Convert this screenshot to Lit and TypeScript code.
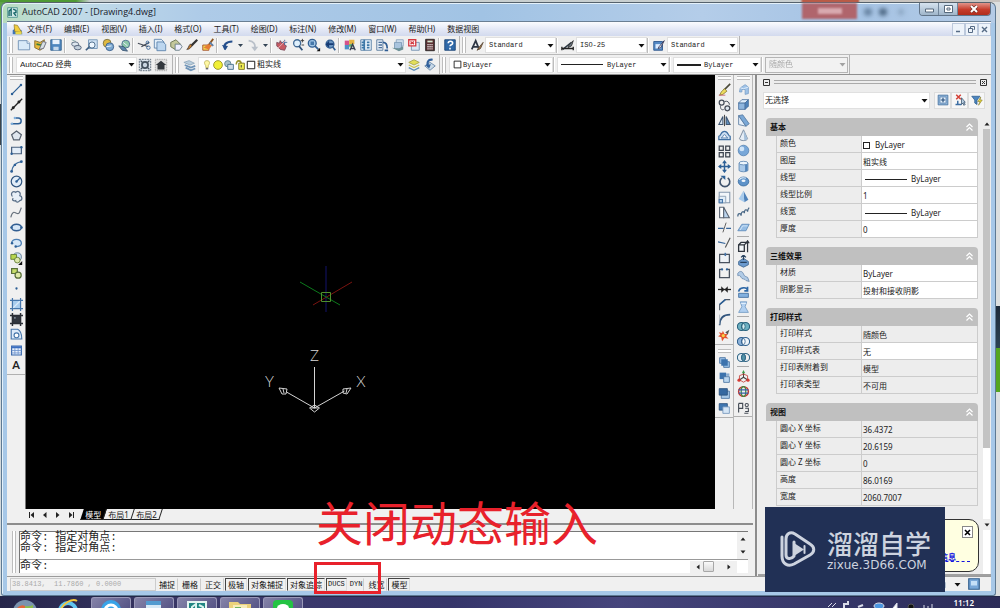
import { LitElement, html, css, svg, nothing } from "lit";
import { customElement, state } from "lit/decorators.js";

const B = "#2c5f96";
const L = "#a9cdee";

const ICONS: Record<string, unknown> = {
  newdoc: svg`<path d="M1.500 3h10l3 3v7.500h-13z" fill="#d8e9f8" stroke="#6d8fb5"/><path d="M11.500 3v3h3" fill="#fff" stroke="#6d8fb5"/>`,
  open: svg`<path d="M2 3l6 2 5-3-1 9-4 3-6-3z" fill="#e9b93c" stroke="#80682c"/><path d="M7 13l4-9 4 1-3 7z" fill="#d6dfe5" stroke="#667"/><path d="M4 7l5 1" stroke="#3b7e3c" stroke-width="2"/>`,
  save: svg`<path d="M2 2h12v12H2z" fill="#4d87bf" stroke="#33628f"/><path d="M4 2h8v5H4z" fill="#e7f2fc"/><path d="M5 10h6v4H5z" fill="#c4d9ec"/>`,
  print: svg`<path d="M3 2l5 2M3 5l9 3" stroke="#8aa" /><ellipse cx="7" cy="7" rx="4" ry="2.500" fill="#dde6ee" stroke="#55657a"/><ellipse cx="10" cy="11" rx="4" ry="2.500" fill="#c2cfdb" stroke="#4c5a72"/>`,
  preview: svg`<path d="M4 2h10v10H4z" fill="#cfe2f4" stroke="#6f91b5"/><circle cx="8" cy="8" r="3.500" fill="#eef7ff" stroke="#3f5f80"/><path d="M5 10l-4 4" stroke="#3f5f80" stroke-width="2"/>`,
  publish: svg`<circle cx="7" cy="6" r="4.500" fill="#dfb93f" stroke="#777044"/><circle cx="10" cy="10" r="4.500" fill="#7ba8d0" stroke="#3b5f8b"/><path d="M6 10l6-1" stroke="#fff"/>`,
  globe: svg`<circle cx="10" cy="7" r="4.500" fill="#8cc7a8" stroke="#4b6a90"/><path d="M2 9l6 1 4 5-6-1z" fill="#5e86ad" stroke="#3e5872"/><path d="M7 5l5 4" stroke="#eef"/>`,
  cut: svg`<path d="M1 6l12 4M14 5L5 10" stroke="#454c58" stroke-width="1.500"/><circle cx="13" cy="11" r="2" fill="none" stroke="#37669b"/><circle cx="12" cy="5" r="1.500" fill="none" stroke="#37669b"/>`,
  copy: svg`<path d="M1.500 1.500h8l3 3v7h-11z" fill="#e2eef9" stroke="#5c82ac"/><path d="M4.500 4.500h7l3 3v7h-10z" fill="#bcd6ef" stroke="#5c82ac"/>`,
  paste: svg`<path d="M2 5l6-3 5 5-6 6-5-3z" fill="#c4c79b" stroke="#66704e"/><path d="M7 7h6l2 3-3 4H7z" fill="#eef" stroke="#667b83"/>`,
  match: svg`<path d="M14 2L7 9" stroke="#333" stroke-width="2.500"/><path d="M8 8c-1 4-4 5-6 5 2-1 2-4 4-6z" fill="#c58030" stroke="#4a392e"/>`,
  block: svg`<path d="M14 1L8 9" stroke="#8a5423" stroke-width="2"/><path d="M2 8h7v6H2z" fill="#f4d451" stroke="#a5502c"/><path d="M3 11l5-4 5 1-4 5z" fill="#e57c32"/><path d="M10 5l4 4" stroke="#5a7da7" stroke-width="2"/>`,
  undo: svg`<path d="M5 13c-3-5 1-9 8-9" fill="none" stroke="#254f8c" stroke-width="2.500"/><path d="M1 8l4 6 3-5z" fill="#254f8c"/>`,
  redo: svg`<path d="M3 3c6 1 8 4 7 9" fill="none" stroke="#b9c0c9" stroke-width="2"/><path d="M6 10l4 5 4-5z" fill="#b9c0c9"/>`,
  pan: svg`<path d="M2 5l3 1 1-3 2 3 2-2 1 4 2 1-2 5-5-1-4-4z" fill="#c85a62" stroke="#7b4a5a"/><path d="M8 5h6M11 2v6" stroke="#456ea0"/><path d="M3 12l9-9" stroke="#e7b8bb"/>`,
  zoom: svg`<circle cx="7" cy="6" r="4" fill="#dff0fc" stroke="#426b96" stroke-width="1.500"/><path d="M9 9l4 5" stroke="#31547b" stroke-width="2"/><path d="M11 3h4M13 1v4M12 8h3" stroke="#333"/>`,
  zoomwin: svg`<circle cx="6" cy="6" r="4.500" fill="#9fc4e5" stroke="#335f92" stroke-width="1.500"/><path d="M4 4h4v4H4z" fill="#4577a9"/><path d="M9 9l4 4" stroke="#335f92" stroke-width="2"/><path d="M11 15h4v-4z" fill="#111"/>`,
  zoomprev: svg`<circle cx="8" cy="7" r="4.500" fill="#6a94c0" stroke="#335f92" stroke-width="1.500"/><path d="M3 7l4-4v3h5v2H7v3z" fill="#173b73"/><path d="M11 10l3 4" stroke="#335f92" stroke-width="2"/>`,
  props: svg`<path d="M2 3h5v5H2z" fill="#d4528b"/><path d="M7 2h6v5H7z" fill="#e5b342"/><path d="M2 8h5v5H2z" fill="#4b8fc7"/><path d="M7 7h4v3H7z" fill="#57a965"/><path d="M8 14l3-7 3 7M9 12h4" stroke="#384050" fill="none" stroke-width="1.500"/>`,
  dcenter: svg`<path d="M2 2h12v12H2z" fill="#e8f3fb" stroke="#527ca4"/><path d="M6 2v12M9 5h3M9 8h3M9 11h3M3 5h2M3 8h2M3 11h2" stroke="#3d78a7" stroke-width="2"/>`,
  palette: svg`<path d="M2 2h7v12H2z" fill="#e6eef7" stroke="#56789b"/><path d="M4 5h4M4 8h4M4 11h4" stroke="#4b6f99" stroke-width="1.500"/><path d="M9 5c4 0 5 3 5 7M11 14h4" stroke="#2f5d93" stroke-width="2" fill="none"/>`,
  sheet: svg`<path d="M6 2h8v7H6z" fill="#d5e3f0" stroke="#8aa5c0"/><path d="M4 5h8v7H4z" fill="#a9c4dd" stroke="#7d9ab6"/><path d="M1 11l8 1 5-3v4l-5 2z" fill="#6e9298"/>`,
  markup: svg`<path d="M5 5h9v9H5z" fill="#d9e6f2" stroke="#7290af"/><path d="M2 2h8v7H2z" fill="#fff" stroke="#d3373f" stroke-width="1.500"/><path d="M4 4l4 3M8 4L4 7" stroke="#d3373f" stroke-width="1.500"/>`,
  calc: svg`<path d="M3 1.500h10v13H3z" fill="#5a2f31" stroke="#272323"/><path d="M5 3h6v2H5z" fill="#d8e7d1"/><path d="M5 7.500h6M5 10h6M5 12.500h6" stroke="#e9e2e2" stroke-dasharray="1.500 .8" stroke-width="1.500"/>`,
  help: svg`<path d="M2 2h12v12H2z" fill="#2f69a8" stroke="#1c4677"/><path d="M6 6c0-3 5-3 5 0 0 2-3 1.500-3 3.500M8 11v2" stroke="#fff" fill="none" stroke-width="1.800"/>`,
  textstyle: svg`<path d="M2 13L6.500 3l4 10M4 10h5" fill="none" stroke="#2e3644" stroke-width="2"/><path d="M15 5l-5 6-2 3 4-2z" fill="#a57b4a" stroke="#5b4938"/>`,
  dimstyle: svg`<path d="M2 13l10-8" stroke="#2f3b46" stroke-width="1.500"/><path d="M1 12h13M1 10v4M14 10v4" stroke="#222" stroke-width="1.500"/><path d="M14 3l-5 5-1 3 4-2z" fill="#67727e" stroke="#333"/>`,
  tablestyle: svg`<path d="M2 4h10v10H2z" fill="#5489c4" stroke="#2b568d"/><path d="M4 7h6v5H4z" fill="#dcecff"/><path d="M14 3L8 10l-1 2 3-1z" fill="#e8f1fa" stroke="#335"/>`,
  gear: svg`<path d="M1.500 1.500h13v13h-13z" fill="#dce5ee" stroke="#52606e" stroke-dasharray="2 1"/><circle cx="8" cy="8" r="3.500" fill="#cad6e2" stroke="#44515e" stroke-width="2"/><path d="M3 3l3 3M13 3l-3 3M3 13l3-3M13 13l-3-3" stroke="#44515e" stroke-width="1.500"/>`,
  home: svg`<path d="M1.500 1.500h13v13h-13z" fill="#ddd" stroke="#999" stroke-dasharray="1 1"/><path d="M8 3l6 5h-2v5H4V8H2z" fill="#33383e"/>`,
  layers: svg`<path d="M1 5l6-2 6 3-5 2z" fill="#b9cddd" stroke="#90a8bc"/><path d="M2 8l7 3 5-2M3 11l6 3 5-2" fill="none" stroke="#6f94b8" stroke-width="2"/>`,
  bulb: svg`<path d="M8 1c6 0 4 6 2 8v3H6V9C4 7 2 1 8 1z" fill="#fff8a4" stroke="#a69b37"/><path d="M6 14h4" stroke="#555" stroke-width="2"/>`,
  sun: svg`<circle cx="8" cy="8" r="7" fill="#f1ef35" stroke="#9a972d" stroke-width="1.500"/>`,
  freeze: svg`<circle cx="6" cy="6" r="5" fill="#a9c2cc" stroke="#5f8290" stroke-width="1.500"/><path d="M6 7h9v8H6z" fill="#d0dce7" stroke="#4c7692" stroke-width="1.500"/>`,
  lock: svg`<path d="M2 7c0-8 8-7 8 0" fill="none" stroke="#99932f" stroke-width="2.500"/><path d="M6 5h9v10H6z" fill="#f1ee53" stroke="#827c29" stroke-width="1.500"/><path d="M10 8v4" stroke="#443" stroke-width="1.500"/>`,
  box: svg`<path d="M2 2h12v12H2z" fill="#fff" stroke="#111" stroke-width="1.500"/>`,
  layprev: svg`<path d="M2 5l6-3 6 3-6 3z" fill="#e3df5a" stroke="#a3a350"/><path d="M2 8l6 3 6-3" fill="none" stroke="#c9c557" stroke-width="1.500"/><path d="M2 11l6 3 6-3" fill="none" stroke="#5a8bb8" stroke-width="1.500"/>`,
  laystate: svg`<path d="M2 9l6-4 6 4-6 5z" fill="#c8d9e8" stroke="#6484a6"/><path d="M11 2c-5-1-7 3-5 8" fill="none" stroke="#31609b" stroke-width="2.500"/><path d="M3 8l4 4 2-5z" fill="#31609b"/>`,

  line: svg`<path d="M3 13L13 3" stroke="${B}" stroke-width="1.500"/><circle cx="2.500" cy="13.500" r="1.500" fill="${B}"/><circle cx="13.500" cy="2.500" r="1.500" fill="${B}"/>`,
  xline: svg`<path d="M1 15L15 1" stroke="#222" stroke-width="1.600"/><circle cx="11" cy="5" r="1.800" fill="#222"/><circle cx="4" cy="12" r="1.800" fill="#222"/>`,
  pline: svg`<path d="M1 12h9c5 0 5-7 0-7H7" stroke="${B}" fill="none" stroke-width="1.800"/><circle cx="2.500" cy="12" r="1.500" fill="#7faedb"/><circle cx="6" cy="5" r="1.500" fill="#7faedb"/>`,
  polygon: svg`<path d="M8 2.500l6 4.500-2.500 6.500h-7L2 7z" fill="#dfe6ee" stroke="#56606d" stroke-width="1.500"/>`,
  rect: svg`<path d="M2 4h12v8H2z" fill="#e3edf8" stroke="#49617f" stroke-width="1.500"/><circle cx="2" cy="12" r="1.500" fill="${B}"/><circle cx="14" cy="4" r="1.500" fill="${B}"/>`,
  arc: svg`<path d="M2 14C3 7 7 3 14 2" fill="none" stroke="#406d9e" stroke-width="1.600"/><circle cx="2" cy="14" r="1.700" fill="${B}"/><circle cx="14" cy="2" r="1.700" fill="${B}"/><circle cx="6" cy="6" r="1.500" fill="${B}"/>`,
  circle: svg`<circle cx="8" cy="8" r="6.500" fill="#e2edf8" stroke="#315680" stroke-width="1.500"/><path d="M8 8l4-4" stroke="${B}" stroke-width="1.500"/><circle cx="8" cy="8" r="1.500" fill="${B}"/>`,
  cloud: svg`<path d="M3 8C0 4 4 0 7 3c3-3 7 0 5 4 4 1 3 6 0 6-2 3-5 2-5 0-3 1-5-1-3-3" fill="#e7eff7" stroke="#5a6f88" stroke-width="1.500"/>`,
  spline: svg`<path d="M1 14c2-9 5-6 7-5 4 2 4-3 6-7" fill="none" stroke="#66707c" stroke-width="1.400"/>`,
  ellipse: svg`<ellipse cx="8" cy="8" rx="6" ry="4" fill="#d6e7f7" stroke="#315d91" stroke-width="1.800"/><circle cx="1.800" cy="8" r="1.500" fill="${B}"/><circle cx="14.200" cy="8" r="1.500" fill="${B}"/>`,
  earc: svg`<path d="M2 9c0-7 12-6 12 0 0 3-4 4-7 4" fill="#d6e7f7" stroke="#4d7fb4" stroke-width="1.600"/><circle cx="2.500" cy="9" r="1.500" fill="${B}"/><circle cx="7" cy="13" r="1.500" fill="${B}"/>`,
  insert: svg`<circle cx="9" cy="6" r="5" fill="#cfe2f4" stroke="#526f8b"/><path d="M1 3h7v6H1z" fill="#b7d64e" stroke="#5a742d"/><circle cx="9" cy="10" r="3.500" fill="#dce9aa" stroke="#5a742d"/><path d="M10 16h5v-5z" fill="#111"/>`,
  makeblock: svg`<path d="M2 2h7v6H2z" fill="#c7dd6b" stroke="#586f3a" stroke-width="1.500"/><circle cx="10" cy="10" r="3.800" fill="#dfeaa8" stroke="#586f3a" stroke-width="1.500"/>`,
  point: svg`<circle cx="8" cy="8" r="1.400" fill="${B}"/>`,
  hatch: svg`<path d="M3 3h10v10H3z" fill="${L}"/><path d="M3 0v16M13 0v16M0 3h16M0 13h16" stroke="#4676ab" stroke-width="1.500"/><path d="M4 12l8-8" stroke="#d9eafa" stroke-width="1.500"/>`,
  gradient: svg`<path d="M3 3h10v10H3z" fill="#32373f"/><path d="M3 0v16M13 0v16M0 3h16M0 13h16" stroke="#2b2f36" stroke-width="1.800"/><path d="M5 5h2v2H5z" fill="#7c8895"/>`,
  region: svg`<path d="M1.500 1.500h8c4 2 5 6 5 12h-13z" fill="#dceafa" stroke="#4776aa" stroke-width="1.400"/><circle cx="8" cy="9" r="3" fill="#fff" stroke="#4776aa" stroke-width="1.400"/>`,
  table: svg`<path d="M2 2.500h12v11H2z" fill="#e8f1fc" stroke="#3766aa" stroke-width="1.400"/><path d="M2 4h12" stroke="#3b6fc0" stroke-width="2.500"/><path d="M6 5v8M10 5v8M2 8h12M2 11h12" stroke="#6c93cc"/>`,

  erase: svg`<path d="M15 1L7 9" stroke="#4b4b3a" stroke-width="2"/><path d="M8 7l3 3-5 4-4 1 2-4z" fill="#eddc5d" stroke="#877b34"/><path d="M1 15h8" stroke="#c8586e"/>`,
  mcopy: svg`<circle cx="4.500" cy="4.500" r="3" fill="none" stroke="#444b57" stroke-width="1.500"/><circle cx="11.500" cy="11.500" r="3" fill="#dde5ed" stroke="#444b57" stroke-width="1.500"/><path d="M8 3c4-1 6 1 6 4M3 8c0 4 1 6 4 5" fill="none" stroke="#444b57" stroke-width="1.200"/>`,
  mirror: svg`<path d="M6 3v10H1z" fill="#dbe9f5" stroke="#3f5672" stroke-width="1.300"/><path d="M10 3v10h5z" fill="#5f8fbd" stroke="#3f5672" stroke-width="1.300"/><path d="M8 1v14" stroke="#222"/>`,
  offset: svg`<path d="M1 13V9c3 0 2-6 7-6s4 6 7 6v4z" fill="#cfe0f2" stroke="#3f6fa2" stroke-width="1.500"/><path d="M4 11c2 0 2-4 4-4s2 4 4 4z" fill="#fff" stroke="#3f6fa2"/>`,
  array: svg`<path d="M1.500 1.500h5v5h-5zM9.500 1.500h5v5h-5zM1.500 9.500h5v5h-5zM9.500 9.500h5v5h-5z" fill="#eee" stroke="#3c434e" stroke-width="1.500"/>`,
  move: svg`<path d="M8 2v12M2 8h12" stroke="${B}" stroke-width="1.800"/><path d="M8 0l3 4H5zM8 16l3-4H5zM0 8l4-3v6zM16 8l-4-3v6z" fill="${B}"/>`,
  rotate: svg`<path d="M5 3.500a6 6 0 1 0 7 0" fill="none" stroke="#40536d" stroke-width="2"/><path d="M3 1h6v5z" fill="${B}"/>`,
  scale: svg`<path d="M1.500 1.500h13v13h-13z" fill="#f2f6fa" stroke="#8497ad" stroke-width="1.300"/><path d="M1.500 6.500h8v8h-8z" fill="#e2edf7" stroke="#8497ad"/><path d="M1.500 10.500h4v4h-4z" fill="#b4cfe9" stroke="#4776aa" stroke-width="1.300"/>`,
  stretch: svg`<path d="M2 1.500h5v13H2z" fill="#fff" stroke="#57616f" stroke-width="1.300"/><path d="M7 1.500l7 13H7z" fill="#bbd4ed" stroke="#57616f" stroke-width="1.300"/>`,
  trim: svg`<path d="M0 9h7M10 9h6" stroke="#37669b" stroke-width="1.500"/><path d="M10 2L6 14" stroke="#444"/>`,
  extend: svg`<path d="M0 6l9 2" stroke="#37669b" stroke-width="1.500"/><path d="M15 1L9 13" stroke="#555" stroke-width="1.300"/>`,
  breakpt: svg`<path d="M2 3h12v10H2z" fill="#eef2f6" stroke="#49525f" stroke-width="1.500"/><path d="M8 1h2v4H8z" fill="#4776aa"/>`,
  brk: svg`<path d="M5 3H2v10h12V3h-3" fill="none" stroke="#49525f" stroke-width="1.600"/><circle cx="5" cy="3" r="1.400" fill="${B}"/><circle cx="11" cy="3" r="1.400" fill="${B}"/>`,
  join: svg`<path d="M0 8h16" stroke="#222" stroke-width="1.600"/><path d="M4 4l4 4-4 4zM12 4L8 8l4 4z" fill="#222"/>`,
  chamfer: svg`<path d="M2 15V8l7-6h6" fill="none" stroke="#4e5866" stroke-width="1.300"/><path d="M2 8l7-6" stroke="${B}" stroke-width="2"/>`,
  fillet: svg`<path d="M2 15c0-9 4-13 13-13" fill="none" stroke="#33567e" stroke-width="2"/><path d="M2 2v12" stroke="#a3adb8"/>`,
  explode: svg`<path d="M9 4l5-3-2 6z" fill="#555"/><path d="M1 4l4 1 1-3 2 4 4 0-2 3 3 3-5-1-3 4-1-5-4-1 3-2z" fill="#e3532f"/><circle cx="6.500" cy="8" r="2" fill="#f7cf43"/>`,
  ordFront: svg`<path d="M2 2h7v7H2zM7 7h7v7H7z" fill="#9cc1e6" stroke="#446f9e"/><path d="M4 4h8v8H4z" fill="#3d73ad"/>`,
  ordBack: svg`<path d="M2 2h8v8H2z" fill="#3d73ad"/><path d="M7 7h7v7H7z" fill="#bbd6ef" stroke="#446f9e"/><path d="M10 3h4v3h-4z" fill="#8aacd0"/>`,
  ordAbove: svg`<path d="M4 5h10v9H4z" fill="#a9c9e8" stroke="#446f9e"/><path d="M1.500 2h10v8h-10z" fill="#3568a0" stroke="#274f7c"/>`,
  ordUnder: svg`<path d="M1.500 2h10v8h-10z" fill="#3f77b2" stroke="#274f7c"/><path d="M6 6h8v8H6z" fill="#d5e6f6" stroke="#6f93ba"/>`,

  polysolid: svg`<path d="M4 6l6-4 4 3v8l-4 1V8H6v3H3z" fill="#9fc3e8" stroke="#7a9fc6"/><path d="M4 6l4 1 6-2" fill="none" stroke="#eaf4ff"/>`,
  cube: svg`<path d="M2 6h8v8H2z" fill="#8fb6de" stroke="#476f9c"/><path d="M2 6l4-4h8l-4 4z" fill="#e0eefb" stroke="#476f9c"/><path d="M10 6l4-4v8l-4 4z" fill="#4f83bb" stroke="#476f9c"/>`,
  wedge: svg`<path d="M2 2v11l9 2z" fill="#e6f0fa" stroke="#56799f"/><path d="M2 2l5-1 8 11-4 3z" fill="#7aa8d6" stroke="#56799f"/>`,
  cone: svg`<path d="M8 1l5 11c-1 3-9 3-10 0z" fill="#e6eef6" stroke="#66798f"/><path d="M8 1l5 11c-1 2-4 2-4 2z" fill="#a4bfd9"/>`,
  sphere: svg`<circle cx="8" cy="8" r="6.500" fill="#78a7d8" stroke="#5682b2"/><circle cx="6" cy="6" r="3" fill="#cfe4f8"/>`,
  cylinder: svg`<path d="M2.500 4v9c2 2 9 2 11 0V4z" fill="#a9c9e9" stroke="#5a84b0"/><ellipse cx="8" cy="3.800" rx="5.500" ry="2.200" fill="#ecf5fd" stroke="#5a84b0"/><path d="M10 6v8l3-1V5z" fill="#4f82b8"/>`,
  torus: svg`<ellipse cx="8" cy="8" rx="6.500" ry="5.500" fill="#5e93c9" stroke="#396b9f"/><ellipse cx="8" cy="7" rx="2.500" ry="1.500" fill="#f1f6fb"/><path d="M3 6c1-3 6-3 8-2" stroke="#d8eafa" stroke-width="1.500" fill="none"/>`,
  pyramid: svg`<path d="M8 1l6 11-5 3z" fill="#4e82ba"/><path d="M8 1L2 11l7 4z" fill="#a8cbec"/>`,
  helix: svg`<path d="M1 13c0-5 4-4 4-1 0-6 4-6 4-3 0-6 4-5 4-2 0-3 1-4 2-5" fill="none" stroke="#476685" stroke-width="1.500"/>`,
  plane: svg`<path d="M1 12l5-8h9l-4 8z" fill="#94bce4" stroke="#5a88b8"/><path d="M4 11l3-5h6" fill="none" stroke="#dcedfd"/>`,
  extrude: svg`<path d="M2 6h7v8H2zM2 6l3-3h7L9 6" fill="#f3f6f9" stroke="#2e343d" stroke-width="1.600"/><path d="M13 1v14M11 4l2-3 2 3" stroke="#2e343d" stroke-width="1.500" fill="none"/>`,
  presspull: svg`<path d="M2 8l6-4 6 4v4l-6 3-6-3z" fill="#6b9ace" stroke="#3d628b"/><path d="M8 0v6M5 3l3-3 3 3M4 9l8 0" stroke="#28425f" stroke-width="1.500" fill="none"/>`,
  sweep: svg`<path d="M1 4c3-4 6-2 7 1s3 3 5 4l2 5-4-1c-1-3-5-1-6-4S2 7 1 7z" fill="#b1cbe6" stroke="#6788ad"/>`,
  revolve: svg`<path d="M2 9h12v5H2z" fill="#83b1df" stroke="#3b6a9c"/><path d="M2 7c1-6 10-6 11-2M13 1v5H9" fill="none" stroke="#2e68a6" stroke-width="2"/>`,
  loft: svg`<path d="M4 1h8l-2 6 4 7H2l4-7z" fill="#b0cff0" stroke="#6f97c2"/><path d="M5 3h6" stroke="#eef6ff"/>`,
  union: svg`<circle cx="5.500" cy="8" r="5" fill="#6cb0c1" stroke="#27607b" stroke-width="1.300"/><circle cx="10.500" cy="8" r="5" fill="#6cb0c1" stroke="#27607b" stroke-width="1.300"/><ellipse cx="8" cy="8" rx="2" ry="3.500" fill="#d4edf0" stroke="#27607b"/>`,
  subtract: svg`<circle cx="5.500" cy="8" r="5" fill="#8db3da" stroke="#2f5f8d" stroke-width="1.300"/><circle cx="10.500" cy="8" r="5" fill="#eef4f9" stroke="#2f5f8d" stroke-width="1.300"/><ellipse cx="8" cy="8" rx="2" ry="3.500" fill="#fff" stroke="#2f5f8d"/>`,
  intersect: svg`<circle cx="5.500" cy="8" r="5" fill="#e6f0f7" stroke="#2f6484" stroke-width="1.300"/><circle cx="10.500" cy="8" r="5" fill="none" stroke="#2f6484" stroke-width="1.300"/><ellipse cx="8" cy="8" rx="2.300" ry="4" fill="#5393a8" stroke="#2f6484"/>`,
  move3d: svg`<path d="M8 9V2M8 9l-6 4M8 9l6 4" stroke="#444" stroke-width="1.300"/><path d="M8 0l2 4H6z" fill="#3a9b47"/><circle cx="2.500" cy="12.500" r="2" fill="#d63b33"/><circle cx="13.500" cy="12.500" r="2" fill="#d63b33"/><path d="M3 7l5-2 5 2v5l-5 3-5-3z" fill="none" stroke="#c23b35"/>`,
  rotate3d: svg`<circle cx="8" cy="8" r="6" fill="none" stroke="#c3352e" stroke-width="1.800"/><ellipse cx="8" cy="8" rx="2.800" ry="6" fill="none" stroke="#3a8a3f" stroke-width="1.500"/><path d="M2 6h12M2 10h12" stroke="#385fa8" stroke-width="1.300"/>`,
  align3d: svg`<path d="M2 3v11M2 3h5v6H2" fill="none" stroke="#444b55" stroke-width="1.400"/><circle cx="12" cy="5" r="2" fill="none" stroke="#444b55" stroke-width="1.300"/><path d="M10 9h4v4h-4M9 15h5" fill="none" stroke="#444b55" stroke-width="1.300"/>`,

  pickadd: svg`<path d="M1.500 1.500h13v13h-13z" fill="#8fb3d6" stroke="#3e6c9d"/><path d="M4 4h8v8H4z" fill="#e5f1fb" stroke="#5d87b3"/><path d="M8 5v6M5 8h6" stroke="#224a78" stroke-width="1.500"/>`,
  selobj: svg`<path d="M2 14h8M5 9v4" stroke="#3d6ea3" stroke-width="2"/><path d="M3 1l6 6M9 1L3 7" stroke="#d43e34" stroke-width="2"/><path d="M10 5v9l2-2 1 3 2-1-2-3h2z" fill="#b9cfe2" stroke="#37516c"/>`,
  quick: svg`<path d="M1 3h11L8 8v6l-3-2V8z" fill="#4c86c0" stroke="#2c5b8c"/><path d="M13 4l-4 6h3l-2 5 5-7h-3z" fill="#f2e23e" stroke="#857b2b" stroke-width=".8"/>`,
  mail: svg`<path d="M2 1h7l4 5v8H2z" fill="#d9e8f4" stroke="#547a9c"/><path d="M3 9h9v5H3z" fill="#78a6c4"/>`,
  clean: svg`<path d="M1 1h14v14H1z" fill="#79a8d9" stroke="#33608f" stroke-width="1.600"/><path d="M4 4h8v6H4z" fill="#c5e0f8"/>`,
  appcad: svg`<path d="M1 1h14v14H1z" fill="#d5ebe8" stroke="#2f7f7d"/><path d="M3 13V6l3-3v10M9 3l4 2v3l-3 1 3 4" stroke="#176668" fill="none" stroke-width="2"/>`,
  appdoc: svg`<path d="M1 9l4-3 9 3 1 6H1z" fill="#3f75b8"/><path d="M3 1l5 1 6 10-10-1z" fill="#f2ce3e" stroke="#8e7524"/><path d="M5 11h9v4H5z" fill="#e9d64a"/>`,
};

const icon = (name: string, size = 14) =>
  html`<svg class="ic" width=${size} height=${size} viewBox="0 0 16 16" fill="none" aria-hidden="true">${ICONS[name]}</svg>`;

const down = () =>
  html`<svg class="down" width="7" height="5" viewBox="0 0 7 5" aria-hidden="true"><path d="M0.500 1h6L3.500 4.500z" fill="#111" /></svg>`;

type Row = [label: string, value: string, mark?: "box" | "line", readonly?: boolean];

const SECTIONS: { title: string; rows: Row[] }[] = [
  {
    title: "基本",
    rows: [
      ["颜色", "ByLayer", "box"],
      ["图层", "粗实线"],
      ["线型", "ByLayer", "line"],
      ["线型比例", "1"],
      ["线宽", "ByLayer", "line"],
      ["厚度", "0"],
    ],
  },
  { title: "三维效果", rows: [["材质", "ByLayer"], ["阴影显示", "投射和接收阴影"]] },
  {
    title: "打印样式",
    rows: [
      ["打印样式", "随颜色", undefined, true],
      ["打印样式表", "无"],
      ["打印表附着到", "模型", undefined, true],
      ["打印表类型", "不可用", undefined, true],
    ],
  },
  {
    title: "视图",
    rows: [
      ["圆心 X 坐标", "36.4372", undefined, true],
      ["圆心 Y 坐标", "20.6159", undefined, true],
      ["圆心 Z 坐标", "0", undefined, true],
      ["高度", "86.0169", undefined, true],
      ["宽度", "2060.7007", undefined, true],
    ],
  },
];

const MENUS = ["文件(F)", "编辑(E)", "视图(V)", "插入(I)", "格式(O)", "工具(T)", "绘图(D)", "标注(N)", "修改(M)", "窗口(W)", "帮助(H)", "数据视图"];
const STANDARD = [
  ["newdoc", "open", "save"],
  ["print", "preview", "publish", "globe"],
  ["cut", "copy", "paste", "match", "block"],
  ["undo", ">", "redo", ">"],
  ["pan", "zoom", "zoomwin", "zoomprev"],
  ["props", "dcenter", "palette", "sheet", "markup", "calc"],
  ["help"],
];
const DRAW = ["line", "xline", "pline", "polygon", "rect", "arc", "circle", "cloud", "spline", "ellipse", "earc", "insert", "makeblock", "point", "hatch", "gradient", "region", "table", "A"];
const MODIFY = ["erase", "mcopy", "mirror", "offset", "array", "move", "rotate", "scale", "stretch", "trim", "extend", "breakpt", "brk", "join", "chamfer", "fillet", "explode"];
const ORDER = ["ordFront", "ordBack", "ordAbove", "ordUnder"];
const SOLIDS = [
  ["polysolid", "cube", "wedge", "cone", "sphere", "cylinder", "torus", "pyramid", "helix", "plane"],
  ["extrude", "presspull", "sweep", "revolve", "loft"],
  ["union", "subtract", "intersect"],
  ["move3d", "rotate3d", "align3d"],
];

@customElement("app-root")
export class AppRoot extends LitElement {
  @state() private modes: Record<string, boolean> = {
    捕捉: false, 栅格: false, 正交: false, 极轴: true, 对象捕捉: true, 对象追踪: true, DUCS: true, DYN: false, 线宽: false, 模型: true,
  };

  static styles = css`
    :host {
      display: grid;
      grid-template-rows: minmax(0, 1fr) 12px;
      height: 100vh;
      overflow: hidden;
      position: relative;
      font: 8px/12px "Noto Sans", "Noto Sans CJK SC", sans-serif;
      color: #222;
    }
    * { box-sizing: border-box; }
    button, select, input { font: inherit; color: inherit; margin: 0; padding: 0; border: 0; background: none; border-radius: 0; outline: 0; }
    select { appearance: none; min-width: 0; flex: 1; }
    a { color: inherit; text-decoration: none; }
    .ic { display: block; flex: none; }

    .desktop {
      display: grid;
      padding: 2px 4px 0 1px;
      background:
        linear-gradient(#1d2a3a, #2d4353) right 306px / 6px 42px no-repeat,
        linear-gradient(#55a520, #55a520) right 348px / 6px 44px no-repeat,
        linear-gradient(#3c454b, #3c454b) left 104px / 3px 41px no-repeat,
        linear-gradient(90deg, #4f9a34 0 76px, #c8cfd0 90px 800px, #b95b45 803px 858px, #c8c4c0 860px) top / 100% 2px no-repeat,
        linear-gradient(#5ba246, #7db775 60px, #d3d9dc 90px) left / 8px 100% no-repeat,
        #dcdfdf;
    }
    .window {
      display: grid;
      grid-template-rows: 18px minmax(0, 1fr);
      min-height: 0;
      padding: 0 4px 4px 5px;
      border: 1px solid #5e7a94;
      border-top-color: #56626c;
      border-radius: 6px 6px 3px 3px;
      background:
        linear-gradient(90deg, #b7dcbc 0, #c3dde8 60px, #aecbe8 200px, #a1c3e4 480px, #b4cde9 700px, #a5c3e4 850px, #b4cbe6) top / 100% 20px no-repeat,
        #a7c8e8;
      box-shadow: inset 1px 1px 0 #e4f1fa;
    }
    .title { display: flex; align-items: center; gap: 4px; font: 9px/12px "Open Sans", "Noto Sans", sans-serif; color: #17212b; }
    .title h1 { font: inherit; flex: 1; margin: 0; }
    .ghost { width: 55px; height: 16px; align-self: start; background: #b0656c; filter: blur(1px); display: grid; place-items: center; }
    .ghost i { width: 24px; height: 6px; background: #d8a9af; }
    .ghostdots { width: 54px; height: 8px; filter: blur(2px); background: radial-gradient(circle at 7px 4px, #64809f 3px, transparent 5px), radial-gradient(circle at 22px 4px, #4b6581 3px, transparent 5px), radial-gradient(circle at 40px 4px, #89a4c0 2px, transparent 4px); }
    .winbtns { display: flex; align-self: start; border: 1px solid #617387; border-top: 0; border-radius: 0 0 4px 4px; overflow: hidden; }
    .winbtns button { width: 19px; height: 12px; display: grid; place-items: center; background: linear-gradient(#d6e3ef, #9fb5ca); border-right: 1px solid #71859a; }
    .winbtns button:last-child { width: 32px; background: linear-gradient(#e1958a, #c63c2b 55%, #b02d1c); border-right: 0; }

    .client { display: grid; grid-template-rows: 14px 19px 20px minmax(0, 1fr) 15px; min-height: 0; background: #f0f0f0; border-top: 1px solid #6a7f93; }
    .menu { display: flex; align-items: center; padding-left: 5px; background: linear-gradient(#fbfcfe, #e4e9f6 50%, #d3daee); }
    .menu nav { display: flex; flex: 1; padding-left: 4px; gap: 12px; }
    .mdi { display: flex; }
    .mdi button { width: 13px; height: 13px; border: 1px solid #bcc9dc; background: #edf3fa; display: grid; place-items: center; }

    .bar { display: flex; align-items: center; border-bottom: 1px solid #b9b9b9; }
    .bar.second { border-bottom-color: #8f8f8f; }
    .group { display: flex; align-items: center; height: 100%; padding-right: 1px; border-right: 1px solid #b4b4b4; }
    .group.wide { padding-right: 3px; }
    .grip { width: 4px; height: 16px; margin: 0 3px 0 2px; border: solid #bdbdbd; border-width: 0 1px; background: #fff; flex: none; }
    .btn { width: 16px; height: 16px; display: grid; place-items: center; flex: none; }
    .drop { width: 9px; height: 16px; display: grid; place-items: center; }
    .sep { width: 4px; height: 15px; flex: none; border-left: 1px solid #bdbdbd; background: linear-gradient(90deg, #fff 0 1px, transparent 1px); }
    .combo { display: flex; align-items: center; gap: 1px; height: 16px; background: #fff; border: 1px solid #e0e0e0; padding: 0 1px 0 3px; font-family: "Liberation Mono", "Noto Sans CJK SC", monospace; font-size: 7px; }
    .combo.cjk { font-family: "Liberation Sans", "Noto Sans CJK SC", sans-serif; font-size: 8px; }
    .combo.style { width: 71px; }
    .combo.wspace { width: 121px; }
    .combo.layer { width: 208px; }
    .combo.color { width: 104px; }
    .combo.ltype { width: 112px; gap: 4px; }
    .combo.lweight { width: 88px; gap: 3px; }
    .combo.plot { width: 83px; border-color: #b5b5b5; background: #f2f2f2; color: #888; }
    .combo.plot .down { opacity: 0.35; }
    .combo hr { width: 42px; margin: 0; border: 0; border-top: 1px solid #222; flex: none; }
    .combo.lweight hr { width: 24px; border-top-width: 2px; }
    .down { flex: none; display: block; }

    .main { display: grid; grid-template-columns: minmax(0, 1fr) 234px; min-height: 0; }
    .left { display: grid; grid-template-rows: minmax(0, 1fr) 16px 51px; min-height: 0; border-right: 2px solid #8c8c8c; padding-right: 2px; }
    .work { display: grid; grid-template-columns: 19px minmax(0, 1fr) 19px 19px; min-height: 0; }
    .tools { border-right: 1px solid #b8b8b8; overflow: hidden; }
    .hgrip { width: 13px; height: 4px; margin: 1px auto 2px; border: solid #bdbdbd; border-width: 1px 0; background: #fff; }
    .stack { display: grid; grid-auto-rows: 1fr; justify-items: center; }
    .stack button { display: grid; place-items: center; width: 16px; min-height: 0; }
    .n19 { height: 291px; } .n17 { height: 261px; } .n10 { height: 153px; } .n5 { height: 76px; } .n4 { height: 61px; } .n3 { height: 46px; }
    .hsep { margin: 1px 3px 2px; border: 0; border-top: 1px solid #aaa; }
    .hend { margin: 1px 0 4px; border: 0; border-top: 1px solid #b0b0b0; }
    .letter { font: bold 11px/14px Lato, sans-serif; color: #222; }
    .canvas { position: relative; background: #000; overflow: hidden; }
    .canvas svg { position: absolute; left: 224px; top: 184px; }
    .canvas text { font: 300 15px Lato, sans-serif; fill: #d8d8d8; text-anchor: middle; }
    .draw { border-right-color: #777; }

    .tabs { display: flex; align-items: start; padding-left: 18px; border-bottom: 2px solid #8d8d8d; font-size: 8px; line-height: 11px; }
    .tabs button { height: 11px; }
    .arrow { width: 13px; display: grid; place-items: center; }
    .tab { display: flex; padding: 0 3px; border-right: 1px solid #222; border-bottom: 1px solid #222; transform: skewX(-18deg); }
    .tab span { transform: skewX(18deg); }
    .tab.first { margin-left: 5px; background: #000; color: #fff; }

    .command { display: flex; padding: 6px 5px 3px 5px; font: 11px/11px "Liberation Mono", "Noto Sans CJK SC", monospace; }
    .command .vgrip { width: 4px; margin-right: 3px; border: solid #bdbdbd; border-width: 0 1px; background: #fff; }
    .console { flex: 1; min-width: 0; display: grid; grid-template-rows: minmax(0, 1fr) 13px; background: #fff; border: solid #777; border-width: 1px 0 0 1px; }
    .history { display: flex; border-bottom: 1px solid #999; }
    .history p { flex: 1; margin: 0; white-space: pre-line; }
    .vscroll { width: 11px; background: #f0f0f0; display: flex; flex-direction: column; justify-content: space-between; align-items: center; padding: 4px 0; }
    .prompt { display: flex; align-items: center; }
    .prompt input { flex: 1; min-width: 0; }
    .hscroll { width: 47px; height: 12px; margin-right: 11px; background: #f0f0f0; display: flex; align-items: center; justify-content: space-between; padding: 0 5px; }
    .hscroll i { width: 11px; height: 11px; border: 1px solid #a7a7a7; border-radius: 1px; background: linear-gradient(#fafafa, #d9d9d9); margin-right: 10px; }

    .status { display: flex; align-items: center; border-top: 1px solid #9b9b9b; background: #f0f0f0; padding-left: 3px; }
    .coords { width: 146px; height: 13px; border: 1px solid #ccc; color: #aaa; font: 7px/11px "Liberation Mono", monospace; white-space: pre; padding-left: 1px; }
    .mode { height: 13px; padding: 0 2px; margin-right: 1px; border: 1px solid transparent; border-right-color: #ccc; line-height: 11px; color: #111; }
    .mode.on { border-color: #444 #ddd #ddd #444; }
    .mode.mono { font-family: "Liberation Mono", monospace; font-size: 7px; padding: 0 1px; }
    .tray { margin-left: auto; display: flex; align-items: center; gap: 7px; padding-right: 11px; }

    .palette { position: relative; min-height: 0; display: flex; flex-direction: column; margin-left: 1px; background: #ededed; border-bottom: 2px solid #a0a0a0; overflow: hidden; }
    .ptitle { display: flex; align-items: center; height: 14px; gap: 4px; padding: 0 4px 0 5px; flex: none; }
    .ptitle b { flex: 1; height: 4px; border: solid #aaa; border-width: 1px 0; }
    .pick { display: flex; align-items: center; height: 18px; padding: 0 6px 0 5px; margin-top: 2px; flex: none; }
    .pick .combo { flex: 1; height: 17px; padding-left: 1px; font: 8px/12px "Noto Sans", "Noto Sans CJK SC", sans-serif; margin-right: 4px; }
    .pick button { width: 17px; height: 17px; border: 1px solid #ddd; background: #f6f6f6; display: grid; place-items: center; }
    .props { flex: 1; min-height: 0; display: flex; margin-top: 9px; }
    .sections { flex: 1; padding-left: 8px; display: flex; flex-direction: column; gap: 9px; }
    .section { display: flex; flex-direction: column; }
    .section h2 { display: flex; justify-content: space-between; align-items: center; height: 18px; margin: 0; padding: 0 5px 1px 4px; font: bold 8px/12px "Noto Sans", "Noto Sans CJK SC", sans-serif; background: #c0c0c0; border-radius: 4px 4px 0 0; color: #111; }
    table { border-spacing: 0; margin-left: 10px; table-layout: fixed; border-left: 1px solid #ccc; }
    th, td { height: 17px; padding: 0 0 0 3px; font-weight: normal; text-align: left; border: solid #ccc; border-width: 0 1px 1px 0; line-height: 12px; white-space: nowrap; overflow: hidden; }
    th { width: 85px; padding-bottom: 2px; }
    td { background: #fff; padding: 2px 0 0 1px; }
    td.ro { background: transparent; }
    .val { display: flex; align-items: center; }
    .mbox { width: 7px; height: 7px; border: 1px solid #222; margin-right: 5px; }
    .mline { width: 42px; height: 1px; background: #222; margin: 0 4px 0 2px; }
    .pscroll { width: 7px; margin: 0 1px 0 5px; display: flex; flex-direction: column; background: #fff; padding-bottom: 44px; }
    .pscroll button { height: 11px; background: #ededed; display: grid; place-items: center; }
    .pscroll i { width: 100%; height: 319px; background: #c3c3c3; }
    .pscroll s { flex: 1; }

    .balloon { position: absolute; right: 12px; bottom: 2px; width: 100px; height: 53px; border: 1px solid #333; border-radius: 10px; background: #ffffe1; }
    .balloon button { position: absolute; right: 5px; top: 6px; width: 11px; height: 12px; border: 1px solid #888; background: #fff; display: grid; place-items: center; }
    .balloon a { position: absolute; right: 8px; bottom: 9px; padding-right: 14px; color: #1414e0; font-weight: bold; line-height: 9px; border-bottom: 1px dashed #1414e0; }

    .brand { position: absolute; right: 55px; bottom: 16px; width: 180px; height: 85px; background: #213055; color: #cdd3df; display: flex; align-items: center; gap: 11px; padding: 0 0 1px 15px; }
    .brand strong { display: block; font: 500 26px/32px "Noto Sans CJK SC", sans-serif; }
    .brand span { display: block; font: 12px/12px "DejaVu Sans", sans-serif; }
    .note { position: absolute; left: 316px; top: 497px; margin: 0; color: #e8212b; font: 400 47px/47px "Noto Sans CJK SC", sans-serif; white-space: nowrap; }
    .frame { position: absolute; left: 314px; top: 562px; width: 67px; height: 32px; border: 3px solid #e8212b; }

    .taskbar { display: flex; overflow: hidden; background: linear-gradient(90deg, #26264a, #3d3a6c 22%, #35356a 45%, #46457c 62%, #343566 85%, #2c2c58); color: #fff; padding-left: 5px; border-top: 1px solid #23284a; }
    .taskbar button { width: 40px; height: 20px; margin-right: 3px; display: grid; justify-content: center; align-items: start; border: 1px solid transparent; border-bottom: 0; }
    .taskbar .run { border-color: #9a99b8; background: linear-gradient(135deg, #8583a8, #4e4c80); border-radius: 3px 3px 0 0; }
    .sys { margin-left: auto; display: flex; align-items: end; gap: 6px; padding-right: 26px; height: 11px; }
    .sys time { padding-left: 8px; line-height: 11px; font-size: 8px; font-weight: 600; }
  `;

  private button(name: string, size = 14) {
    return html`<button class="btn" aria-label=${name}>${icon(name, size)}</button>`;
  }

  private combo(cls: string, label: string, value: string, before: unknown = nothing, disabled = false) {
    return html`<span class="combo ${cls}">${before}<select aria-label=${label} ?disabled=${disabled}><option>${value}</option></select>${down()}</span>`;
  }

  private stack(names: string[], cls: string) {
    return html`<div class="stack ${cls}">
      ${names.map((n) => html`<button aria-label=${n}>${n === "A" ? html`<span class="letter">A</span>` : icon(n, 13)}</button>`)}
    </div>`;
  }

  private arrow(d: string) {
    return html`<svg class="ic" width="6" height="6" viewBox="0 0 6 6" aria-hidden="true"><path d=${d} fill="#222" /></svg>`;
  }

  private section(s: (typeof SECTIONS)[number]) {
    return html`<section class="section">
      <h2>${s.title}<svg width="7" height="8" viewBox="0 0 7 8" fill="none" stroke="#fff" stroke-width="1.200"><path d="M.5 4l3-3 3 3M.5 7.500l3-3 3 3" /></svg></h2>
      <table>
        ${s.rows.map(
          ([label, value, mark, ro]) => html`<tr>
            <th scope="row">${label}</th>
            <td class=${ro ? "ro" : ""}><span class="val">${mark ? html`<i class=${mark === "box" ? "mbox" : "mline"}></i>` : nothing}${value}</span></td>
          </tr>`
        )}
      </table>
    </section>`;
  }

  private toggle(name: string) {
    this.modes = { ...this.modes, [name]: !this.modes[name] };
  }

  render() {
    const sep = html`<i class="sep"></i>`;
    const grip = html`<i class="grip"></i>`;
    return html`
      <div class="desktop">
        <div class="window">
          <header class="title">
            ${icon("appcad", 11)}
            <h1>AutoCAD 2007 - [Drawing4.dwg]</h1>
            <span class="ghost"><i></i></span><span class="ghostdots"></span>
            <div class="winbtns">
              <button aria-label="最小化"><svg width="11" height="8" viewBox="0 0 11 8"><path d="M1.500 4h8v3h-8z" fill="#fff" stroke="#56697c" /></svg></button>
              <button aria-label="最大化"><svg width="11" height="8" viewBox="0 0 11 8"><path d="M1.500 .5h8v7h-8zM4 3h3v2H4z" fill="#fff" stroke="#56697c" /></svg></button>
              <button aria-label="关闭"><svg width="10" height="8" viewBox="0 0 10 8"><path d="M2 1l6 6M8 1L2 7" stroke="#6d302a" stroke-width="3.200" /><path d="M2 1l6 6M8 1L2 7" stroke="#fff" stroke-width="2" /></svg></button>
            </div>
          </header>
          <div class="client">
            <div class="menu">
              ${icon("appdoc", 11)}
              <nav>${MENUS.map((m) => html`<a href="#">${m}</a>`)}</nav>
              <div class="mdi">
                <button aria-label="最小化文档"><svg width="7" height="7"><path d="M1 5.500h4" stroke="#566b85" stroke-width="1.500" /></svg></button>
                <button aria-label="还原文档"><svg width="7" height="7" fill="none" stroke="#566b85"><path d="M2.500 2.500v-2h4v3h-1M.5 2.500h4v4h-4z" /></svg></button>
                <button aria-label="关闭文档"><svg width="7" height="7"><path d="M1 1l5 5M6 1L1 6" stroke="#566b85" stroke-width="1.400" /></svg></button>
              </div>
            </div>

            <div class="bar">
              <div class="group">
                ${grip}
                ${STANDARD.map(
                  (g, i) => html`${i ? sep : nothing}${g.map((n) => (n === ">" ? html`<button class="drop" aria-label="列表"><svg width="5" height="3"><path d="M0 0h5L2.500 3z" fill="#345" /></svg></button>` : this.button(n)))}`
                )}
              </div>
              <div class="group">
                ${grip} ${this.button("textstyle")}${this.combo("style", "文字样式", "Standard")}${sep}
                ${this.button("dimstyle")}${this.combo("style", "标注样式", "ISO-25")}${sep}
                ${this.button("tablestyle")}${this.combo("style", "表格样式", "Standard")}
              </div>
            </div>

            <div class="bar second">
              <div class="group wide">
                ${grip} ${this.combo("wspace cjk", "工作空间", "AutoCAD 经典")} ${this.button("gear")}${this.button("home")}
              </div>
              <div class="group">
                ${grip}
                ${this.button("layers")}
                ${this.combo("layer cjk", "图层", "粗实线", ["bulb", "sun", "freeze", "lock", "box"].map((n) => icon(n, 10)))}
                ${this.button("layprev")}${this.button("laystate")}
              </div>
              <div class="group">
                ${grip} ${this.combo("color", "颜色", "ByLayer", icon("box", 9))}${sep}
                ${this.combo("ltype", "线型", "ByLayer", html`<hr />`)}${sep}
                ${this.combo("lweight", "线宽", "ByLayer", html`<hr />`)}${sep}
                ${this.combo("plot cjk", "打印样式", "随颜色", nothing, true)}
              </div>
            </div>

            <div class="main">
              <div class="left">
                <div class="work">
                  <div class="tools draw"><div class="hgrip"></div>${this.stack(DRAW, "n19")}<hr class="hend" /></div>
                  <div class="canvas">
                    <svg width="130" height="165" viewBox="250 260 130 165" fill="none">
                      <path d="M326 267v46" stroke="#12126a" />
                      <path d="M352 283l-39 23" stroke="#7a1410" />
                      <path d="M300 283l40 23" stroke="#0c7a1c" />
                      <path d="M321.500 293.500h9v9h-9z" stroke="#4f8f2c" />
                      <g stroke="#d4d4d4">
                        <path d="M314.500 368v41M314.500 409l-28-16M314.500 409l30-17" />
                        <path d="M279 389l8 1-1 5-4 0zM283 390l1 4M351 389l-8 1 0 4 4 1zM347 390l-1 4" />
                        <path d="M309.500 409l5-3 5 3-5 4zM311 409h7" />
                      </g>
                      <text x="314.500" y="362">Z</text>
                      <text x="269.500" y="388">Y</text>
                      <text x="361" y="388">X</text>
                    </svg>
                  </div>
                  <div class="tools"><div class="hgrip"></div>${this.stack(MODIFY, "n17")}<hr class="hend" /><div class="hgrip"></div>${this.stack(ORDER, "n4")}<hr class="hend" /></div>
                  <div class="tools"><div class="hgrip"></div>${SOLIDS.map((g, i) => html`${i ? html`<hr class="hsep" />` : nothing}${this.stack(g, "n" + g.length)}`)}<hr class="hend" /></div>
                </div>
                <div class="tabs">
                  <button class="arrow" aria-label="首个">${this.arrow("M0 0h1v6H0zM5 0v6L1.500 3z")}</button>
                  <button class="arrow" aria-label="上一个">${this.arrow("M4.500 0v6L1 3z")}</button>
                  <button class="arrow" aria-label="下一个">${this.arrow("M1 0v6l3.500-3z")}</button>
                  <button class="arrow" aria-label="末个">${this.arrow("M5 0h1v6H5zM1 0v6l3.500-3z")}</button>
                  <button class="tab first"><span>模型</span></button><button class="tab"><span>布局1</span></button><button class="tab"><span>布局2</span></button>
                </div>
                <div class="command">
                  <i class="vgrip"></i>
                  <div class="console">
                    <div class="history">
                      <p>命令: 指定对角点:<br />命令: 指定对角点:</p>
                      <div class="vscroll">${this.arrow("M.5 4.500h5L3 1.500z")}${this.arrow("M.5 1.500h5L3 4.500z")}</div>
                    </div>
                    <div class="prompt">
                      <label for="cmd">命令:</label><input id="cmd" />
                      <div class="hscroll">${this.arrow("M4.500 .5v5L1.500 3z")}<i></i>${this.arrow("M1.500 .5v5l3-2.500z")}</div>
                    </div>
                  </div>
                </div>
              </div>

              <aside class="palette">
                <div class="ptitle">
                  <svg width="7" height="7" fill="none" stroke="#333"><path d="M.5 .5h6v6h-6zM2 3.500h3" /></svg><b></b>
                  <svg width="7" height="7" fill="none" stroke="#333"><path d="M.5 .5h6v6h-6zM2 2l3 3M5 2L2 5" /></svg>
                </div>
                <div class="pick">
                  ${this.combo("", "选择", "无选择")}
                  <button aria-label="切换">${icon("pickadd", 12)}</button><button aria-label="选择对象">${icon("selobj", 12)}</button><button aria-label="快速选择">${icon("quick", 12)}</button>
                </div>
                <div class="props">
                  <div class="sections">${SECTIONS.map((s) => this.section(s))}</div>
                  <div class="pscroll">
                    <button aria-label="向上">${this.arrow("M.5 4.500h5L3 1.500z")}</button><i></i><s></s>
                    <button aria-label="向下">${this.arrow("M.5 1.500h5L3 4.500z")}</button>
                  </div>
                </div>
                <div class="balloon">
                  <button aria-label="关闭通知"><svg width="7" height="7"><path d="M1 1l5 5M6 1L1 6" stroke="#000" stroke-width="1.600" /></svg></button>
                  <a href="#">信息</a>
                </div>
              </aside>
            </div>

            <footer class="status">
              <div class="coords">38.8413,  11.7860 , 0.0000</div>
              ${Object.entries(this.modes).map(
                ([n, on]) => html`<button class="mode ${on ? "on" : ""} ${n.startsWith("D") ? "mono" : ""}" aria-pressed=${on} @click=${() => this.toggle(n)}>${n}</button>`
              )}
              <div class="tray">${icon("mail", 10)}${down()}${icon("clean", 12)}</div>
            </footer>
          </div>
        </div>
      </div>

      <div class="taskbar">
        <button aria-label="开始"><svg width="26" height="20" viewBox="0 0 26 20"><circle cx="13" cy="14" r="12" fill="#7b93ae" /><path d="M5 10q4-4 8-2v6H5z" fill="#e3683a" /><path d="M13 8q4 1 8-1v7h-8z" fill="#8dbd4c" /></svg></button>
        <button aria-label="浏览器"><svg width="26" height="20" viewBox="0 0 26 20" fill="none"><circle cx="13" cy="13" r="8" stroke="#60c4ef" stroke-width="4" /><path d="M4 15C8 4 18 0 22 3" stroke="#f4c83c" stroke-width="2" /></svg></button>
        <button class="run" aria-label="搜索"><svg width="24" height="20" viewBox="0 0 24 20" fill="none"><circle cx="12" cy="12" r="10" fill="#39a4e8" /><circle cx="12" cy="13" r="6" stroke="#fff" stroke-width="3" /></svg></button>
        <button class="run" aria-label="记事本"><svg width="18" height="20"><path d="M1 3h15v17H1z" fill="#d7e9f6" /><path d="M1 3h15v4H1z" fill="#539bd0" /></svg></button>
        <button class="run" aria-label="AutoCAD"><svg width="22" height="20"><path d="M1 3h20v17H1z" fill="#e5f4f1" /><path d="M3 5h16v15H3z" fill="#218683" /><path d="M6 20V9l4-3v14M13 7l4 2v4" stroke="#d9f3ef" fill="none" stroke-width="2" /></svg></button>
        <button class="run" aria-label="资源管理器"><svg width="24" height="20"><path d="M1 4h9l2 2h11v14H1z" fill="#ecd27b" /><path d="M5 7h14v13H5z" fill="#f8ecb8" /><path d="M7 9h6v3H7z" fill="#73b25f" /></svg></button>
        <button class="run" aria-label="消息"><svg width="22" height="20"><rect x="1" y="2" width="20" height="18" rx="4" fill="#23c343" /><ellipse cx="11" cy="10" rx="6" ry="4" fill="#fff" /></svg></button>
        <div class="sys">
          <svg width="112" height="8" viewBox="0 0 112 8" fill="none" stroke="#d9dbe8"><path d="M1 7l4-4M5 7l4-4" /><path d="M17 8V4h4V1" stroke-width="2" /><path d="M31 7l5-2" stroke-width="2" /><ellipse cx="52" cy="6" rx="5" ry="3" fill="#4b95df" /><path d="M66 8l4-5v5" fill="#fff" /><circle cx="84" cy="7" r="3" fill="#111" stroke="#555" /><path d="M97 8V5M101 8V6M105 8V4" /></svg>
          <time>11:12</time>
        </div>
      </div>

      <p class="note">关闭动态输入</p>
      <div class="frame"></div>
      <div class="brand">
        <svg width="36" height="40" viewBox="0 0 36 40" fill="none" stroke="#cdd3df" stroke-width="3" stroke-linejoin="round" stroke-linecap="round">
          <path d="M2 8v19c0 8 6 11 12 8l16-9c5-3 5-8 0-11L15 5c-5-3-9 0-9 5v16c0 4 5 5 8 1V13" />
          <path d="M14 14v13l10-6.500z" fill="#cdd3df" stroke="none" /><path d="M24.500 17v7" stroke-width="2" />
        </svg>
        <div><strong>溜溜自学</strong><span>zixue.3D66.COM</span></div>
      </div>
    `;
  }
}
